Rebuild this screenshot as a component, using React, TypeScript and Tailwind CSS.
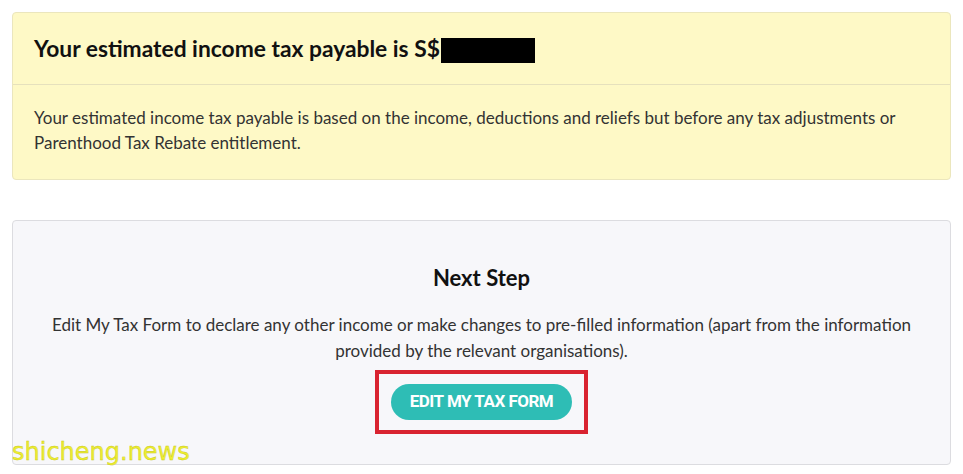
import React from "react";

export default function App() {
  return (
    <div className="w-[963px] h-[474px] bg-white overflow-hidden relative" style={{ fontFamily: "Lato, 'Open Sans', sans-serif" }}>
      <div className="pt-3 px-3">
        <div className="rounded-[4px] border border-[#ebe6bd] bg-[#fef9c6]">
          <div className="h-[72px] flex items-center pl-[21px] border-b border-[#e6e1bd]">
            <h1 className="text-[22.8px] font-bold text-[#111] flex items-center">
              Your estimated income tax payable is S$
              <span className="inline-block w-[94px] h-[25px] bg-black ml-[1px] mt-[4px]" />
            </h1>
          </div>
          <div className="pl-[21px] pr-4 pt-[20px] pb-[24px] text-[17px] leading-[25px] text-[#333]">
            Your estimated income tax payable is based on the income, deductions and reliefs but before any tax adjustments or Parenthood Tax Rebate entitlement.
          </div>
        </div>
        <div className="mt-[40px] h-[245px] rounded-[4px] border border-[#dcdce0] bg-[#f7f7fa] flex flex-col items-center">
          <h2 className="mt-[40px] text-[22px] font-bold text-[#111]">Next Step</h2>
          <p className="mt-[18px] text-center text-[17px] leading-[26px] text-[#333] px-6">
            Edit My Tax Form to declare any other income or make changes to pre-filled information (apart from the information
            <br />
            provided by the relevant organisations).
          </p>
          <div className="mt-[6px] border-4 border-[#d92330] px-[12px] py-[10px]">
            <button className="h-[36px] w-[181px] rounded-full bg-[#2ebdb5] text-white text-[17px] font-bold tracking-[-0.5px]" style={{ fontFamily: "Roboto, sans-serif" }}>
              EDIT MY TAX FORM
            </button>
          </div>
        </div>
      </div>
      <div className="absolute left-[12px] top-[440px] text-[24px] text-[#eeee30] leading-none" style={{ fontFamily: "'DejaVu Sans', sans-serif", WebkitTextStroke: "0.4px #c8c820" }}>
        shicheng.news
      </div>
    </div>
  );
}
